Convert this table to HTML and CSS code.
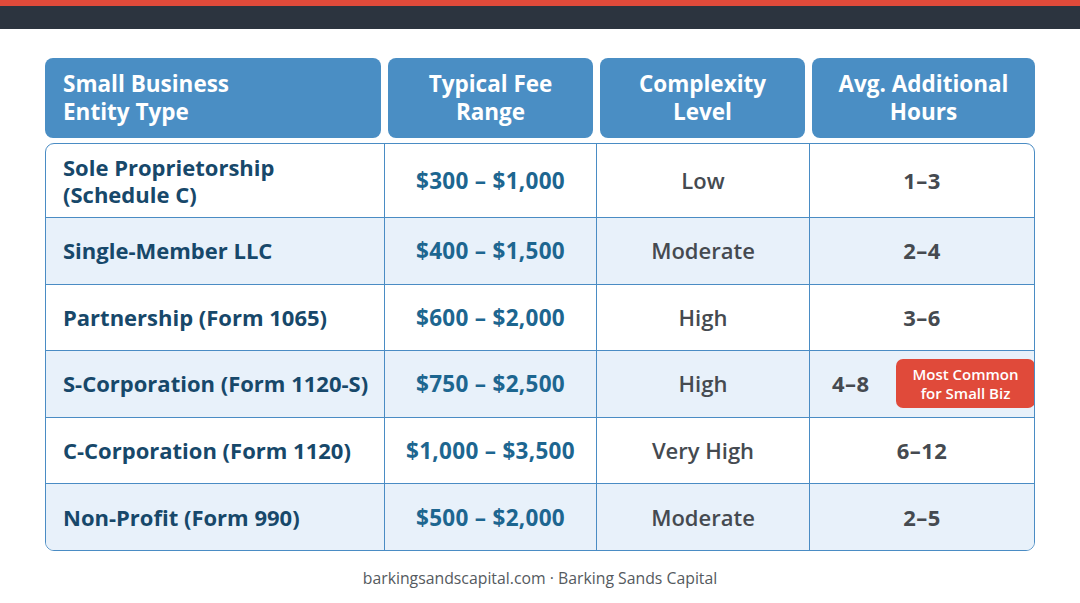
FILE: index.html
```html
<!DOCTYPE html>
<html>
<head>
<meta charset="utf-8">
<link rel="stylesheet" href="styles.css">
</head>
<body>
<div class="topbar"></div>
<main class="wrap">
  <div class="head">
    <div class="hcell left">Small Business<br>Entity Type</div>
    <div class="hcell">Typical Fee<br>Range</div>
    <div class="hcell">Complexity<br>Level</div>
    <div class="hcell">Avg. Additional<br>Hours</div>
  </div>
  <div class="table">
    <div class="row first">
      <div class="c name">Sole Proprietorship<br>(Schedule C)</div>
      <div class="c fee">$300 – $1,000</div>
      <div class="c lvl">Low</div>
      <div class="c hrs">1–3</div>
    </div>
    <div class="row alt">
      <div class="c name">Single-Member LLC</div>
      <div class="c fee">$400 – $1,500</div>
      <div class="c lvl">Moderate</div>
      <div class="c hrs">2–4</div>
    </div>
    <div class="row">
      <div class="c name">Partnership (Form 1065)</div>
      <div class="c fee">$600 – $2,000</div>
      <div class="c lvl">High</div>
      <div class="c hrs">3–6</div>
    </div>
    <div class="row alt">
      <div class="c name">S-Corporation (Form 1120-S)</div>
      <div class="c fee">$750 – $2,500</div>
      <div class="c lvl">High</div>
      <div class="c hrs badged"><span>4–8</span><span class="badge">Most Common<br>for Small Biz</span></div>
    </div>
    <div class="row">
      <div class="c name">C-Corporation (Form 1120)</div>
      <div class="c fee">$1,000 – $3,500</div>
      <div class="c lvl">Very High</div>
      <div class="c hrs">6–12</div>
    </div>
    <div class="row alt last">
      <div class="c name">Non-Profit (Form 990)</div>
      <div class="c fee">$500 – $2,000</div>
      <div class="c lvl">Moderate</div>
      <div class="c hrs">2–5</div>
    </div>
  </div>
  <footer class="foot">barkingsandscapital.com · Barking Sands Capital</footer>
</main>
</body>
</html>
```
FILE: styles.css
```css
* { box-sizing: border-box; }
html, body { margin: 0; padding: 0; }
body {
  width: 1080px;
  height: 603px;
  background: #ffffff;
  font-family: "Open Sans", "Liberation Sans", sans-serif;
  overflow: hidden;
}
.topbar {
  height: 29px;
  background: #2c343f;
  border-top: 6px solid #e04a3a;
}
.wrap {
  padding: 29px 45px 0 45px;
}
.head {
  display: grid;
  grid-template-columns: 336px 205px 205px 223px;
  column-gap: 7px;
  height: 80px;
}
.hcell {
  background: #4a8ec4;
  border-radius: 8px;
  color: #ffffff;
  font-weight: 700;
  font-size: 22.5px;
  line-height: 28px;
  display: flex;
  align-items: center;
  justify-content: center;
  text-align: center;
}
.hcell.left {
  justify-content: flex-start;
  text-align: left;
  padding-left: 18px;
}
.table {
  margin-top: 5px;
  border: 1px solid #4a8cc4;
  border-radius: 9px;
  overflow: hidden;
}
.row {
  display: grid;
  grid-template-columns: 338px 212px 213px 1fr;
  height: 66.6px;
  border-top: 1px solid #4a8cc4;
}
.row.first { border-top: none; height: 73px; }
.row.alt { background: #e8f1fa; }
.c {
  display: flex;
  align-items: center;
  justify-content: center;
  border-left: 1px solid #4a8cc4;
  font-size: 22px;
  line-height: 27px;
}
.c.name {
  border-left: none;
  justify-content: flex-start;
  padding-left: 17px;
  color: #17486a;
  font-weight: 700;
}
.c.fee { color: #1d6690; font-weight: 700; font-size: 22.5px; letter-spacing: 0.3px; }
.c.lvl { color: #454a50; font-weight: 600; }
.c.hrs { color: #454a50; font-weight: 700; letter-spacing: 0.5px; }
.c.badged {
  justify-content: flex-start;
  padding-left: 22px;
  gap: 24px;
}
.badge {
  background: #e04a3a;
  color: #ffffff;
  border-radius: 7px;
  font-size: 15px;
  font-weight: 600;
  letter-spacing: 0;
  line-height: 19px;
  text-align: center;
  width: 139px;
  height: 49px;
  display: flex;
  align-items: center;
  justify-content: center;
  margin-left: auto;
  margin-right: -1px;
}
.foot {
  text-align: center;
  color: #555a60;
  font-size: 15.8px;
  margin-top: 16px;
}
```
